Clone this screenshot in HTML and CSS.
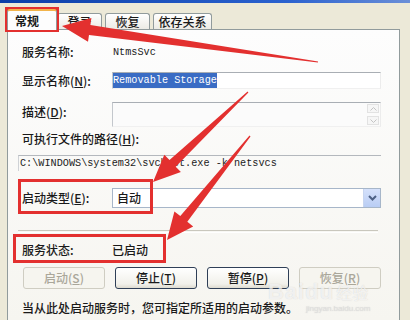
FILE: index.html
```html
<!DOCTYPE html>
<html lang="zh-CN">
<head>
<meta charset="utf-8">
<title>服务属性</title>
<link rel="stylesheet" href="styles.css">
</head>
<body>
<div class="window">
  <div class="titlebar"></div>
  <div class="tabs">
    <div class="tab active">常规</div>
    <div class="tab first">登录</div>
    <div class="tab">恢复</div>
    <div class="tab wide">依存关系</div>
  </div>
  <div class="panel">
    <div class="row r-name">
      <span class="label">服务名称:</span>
      <span class="mono">NtmsSvc</span>
    </div>
    <div class="row r-display">
      <span class="label">显示名称(<u>N</u>):</span>
      <div class="field"><span class="mono sel">Removable Storage</span></div>
    </div>
    <div class="row r-desc">
      <span class="label top">描述(<u>D</u>):</span>
      <div class="field area">
        <div class="area-text"></div>
        <div class="scroll">
          <span class="sbtn"><svg width="7" height="4" viewBox="0 0 7 4"><path d="M0.5 3.5 L3.5 0.5 L6.5 3.5" fill="none" stroke="#c4c4c4" stroke-width="1"/></svg></span>
          <span class="sbtn"><svg width="7" height="4" viewBox="0 0 7 4"><path d="M0.5 0.5 L3.5 3.5 L6.5 0.5" fill="none" stroke="#c4c4c4" stroke-width="1"/></svg></span>
        </div>
      </div>
    </div>
    <div class="line r-pathlabel">可执行文件的路径(<u>H</u>):</div>
    <div class="pathbox mono">C:\WINDOWS\system32\svchost.exe -k netsvcs</div>
    <div class="row r-start">
      <span class="label">启动类型(<u>E</u>):</span>
      <div class="combo">
        <span class="combo-text">自动</span>
        <span class="combo-btn"><svg width="9" height="6" viewBox="0 0 9 6"><path d="M1 1 L4.5 4.5 L8 1" fill="none" stroke="#4d6185" stroke-width="2"/></svg></span>
      </div>
    </div>
    <div class="sep"></div>
    <div class="row r-status">
      <span class="label">服务状态:</span>
      <span class="value">已启动</span>
    </div>
    <div class="buttons">
      <span class="btn disabled">启动(<u>S</u>)</span>
      <span class="btn">停止(<u>T</u>)</span>
      <span class="btn">暂停(<u>P</u>)</span>
      <span class="btn disabled">恢复(<u>R</u>)</span>
    </div>
    <div class="line note">当从此处启动服务时，您可指定所适用的启动参数。</div>
  </div>

  <div class="watermark">
    <span class="wm-big">Bai<span class="wm-paw">du</span></span><span class="wm-cn">经验</span>
    <span class="wm-url">jingyan.baidu.com</span>
  </div>

  <svg class="overlay" width="410" height="320" viewBox="0 0 410 320">
    <g fill="none" stroke="#e3302f" stroke-width="3">
      <rect x="6.5" y="8.5" width="51" height="22"/>
      <rect x="19.5" y="180.5" width="132" height="32"/>
      <rect x="14.5" y="235.5" width="150" height="26"/>
    </g>
    <g fill="#e3302f">
      <polygon points="62,26 91.4,18 90.4,24.9 318.1,61.5 317.9,62.5 89,34.9 88,41.8"/>
      <polygon points="153,182 180.9,172.1 175.7,166.7 248.4,92.4 247.6,91.6 169.5,160.1 164.3,154.7"/>
      <polygon points="167,240 193.2,226.4 187.3,221.7 250.5,136.4 249.5,135.6 180.3,216.1 174.4,211.4"/>
    </g>
  </svg>
</div>
</body>
</html>
```

FILE: styles.css
```css
html, body {
  margin: 0;
  padding: 0;
}

body {
  width: 410px;
  height: 320px;
  overflow: hidden;
  background: #ece9d8;
  font-family: "Noto Sans CJK SC", "Noto Sans", sans-serif;
  font-size: 12px;
  font-weight: 500;
  color: #1a1a1a;
}

.window {
  position: relative;
  width: 410px;
  height: 320px;
  overflow: hidden;
}

.titlebar {
  height: 3px;
  background: linear-gradient(90deg, #0b3ea8, #2b62cf 70%, #6b8fd8);
}

.tabs {
  display: flex;
  align-items: flex-end;
  height: 26px;
  padding-left: 7px;
}

.tab {
  box-sizing: border-box;
  height: 16px;
  line-height: 15px;
  width: 45px;
  margin-left: 3px;
  border: 1px solid #919b9c;
  border-bottom: none;
  border-radius: 3px 3px 0 0;
  background: linear-gradient(#ffffff, #ecebe5);
  text-align: center;
  font-size: 12px;
  color: #1a1a1a;
}

.tab.first {
  margin-left: 0;
}

.tab.wide {
  width: 59px;
}

.tab.active {
  position: relative;
  z-index: 1;
  width: 50px;
  height: 21px;
  margin-left: 0;
  margin-bottom: -1px;
  padding-top: 2px;
  background: #fdfdfd;
  border-top: 2px solid #f2b44b;
  text-align: left;
  padding-left: 7px;
  font-weight: 700;
}

.panel {
  box-sizing: border-box;
  height: 291px;
  margin: 0 10px 0 7px;
  border: 1px solid #919b9c;
  border-bottom: none;
  background: linear-gradient(#fdfdfd, #f6f5f0);
  padding: 14px 18px 0 14px;
}

.row {
  display: grid;
  grid-template-columns: 90px 1fr;
  align-items: center;
}

.label,
.value,
.line {
  line-height: 16px;
  height: 16px;
  white-space: nowrap;
}

.label.top {
  align-self: start;
  padding-top: 2px;
}

.mono {
  font-family: "Liberation Mono", "DejaVu Sans Mono", monospace;
  font-size: 10.2px;
  font-weight: 400;
  color: #222;
}

.r-name {
  height: 16px;
}

.r-name .mono {
  padding-left: 1px;
}

.r-display {
  margin-top: 12px;
}

.field {
  box-sizing: border-box;
  height: 17px;
  border-top: 1px solid #a9aeb4;
  border-left: 1px solid #c3c7cc;
  border-right: 1px solid #ececec;
  border-bottom: 1px solid #f0f0f0;
  background: #ffffff;
  display: flex;
  align-items: stretch;
}

.sel {
  background: #3a6cc4;
  color: #ffffff;
  line-height: 15px;
  padding: 0;
}

.r-desc {
  margin-top: 13px;
}

.field.area {
  height: 25px;
  background: #fbfbfb;
}

.area-text {
  flex: 1;
}

.scroll {
  width: 13px;
  display: flex;
  flex-direction: column;
  gap: 3px;
  padding-top: 1px;
}

.sbtn {
  box-sizing: border-box;
  height: 9px;
  width: 12px;
  border: 1px solid #e2e2e2;
  background: #f6f6f6;
  display: flex;
  align-items: center;
  justify-content: center;
}

.r-pathlabel {
  margin-top: 4px;
}

.pathbox {
  box-sizing: border-box;
  margin-top: 8px;
  margin-left: -4px;
  height: 16px;
  line-height: 15px;
  border-top: 1px solid #b4b8bd;
  border-left: 1px solid #cfd2d6;
  padding-left: 1px;
  white-space: nowrap;
}

.r-start {
  margin-top: 17px;
}

.combo {
  box-sizing: border-box;
  height: 20px;
  border: 1px solid #a7b6c9;
  background: #ffffff;
  display: flex;
  align-items: stretch;
}

.combo-text {
  flex: 1;
  padding-left: 4px;
  line-height: 18px;
}

.combo-btn {
  width: 16px;
  background: linear-gradient(#d5e1fb, #b9cdf4);
  border-left: 1px solid #c7d5f0;
  display: flex;
  align-items: center;
  justify-content: center;
}

.sep {
  margin-top: 22px;
  margin-left: -4px;
  margin-right: 3px;
  height: 1px;
  border-top: 1px solid #c9c7bd;
  border-bottom: 1px solid #ffffff;
}

.r-status {
  margin-top: 9px;
}

.buttons {
  margin-top: 9px;
  margin-left: 1px;
  display: flex;
  gap: 10px;
}

.btn {
  box-sizing: border-box;
  width: 82px;
  height: 22px;
  line-height: 20px;
  text-align: center;
  border: 1px solid #2f3f57;
  border-radius: 3px;
  background: linear-gradient(#ffffff, #f1f0ea 80%, #dedbd0);
  color: #1a1a1a;
}

.btn.disabled {
  border-color: #cfcdc2;
  background: #f6f5ef;
  color: #aaa79a;
}

.note {
  margin-top: 11px;
}

.watermark {
  position: absolute;
  left: 268px;
  top: 280px;
  width: 120px;
  height: 40px;
  color: rgba(255, 255, 255, 0.7);
  text-shadow: 0 0 1px rgba(120, 120, 120, 0.3);
  font-family: "Liberation Sans", "Noto Sans", sans-serif;
  font-weight: 400;
  white-space: nowrap;
}

.wm-big {
  font-size: 22px;
  font-weight: 700;
  letter-spacing: 1px;
  line-height: 24px;
}

.wm-cn {
  font-family: "Noto Sans CJK SC", sans-serif;
  font-size: 16px;
  margin-left: 2px;
}

.wm-url {
  display: block;
  font-size: 8px;
  line-height: 10px;
  margin-left: 38px;
  color: rgba(225, 225, 225, 0.75);
}

.overlay {
  position: absolute;
  left: 0;
  top: 0;
  pointer-events: none;
}
```
